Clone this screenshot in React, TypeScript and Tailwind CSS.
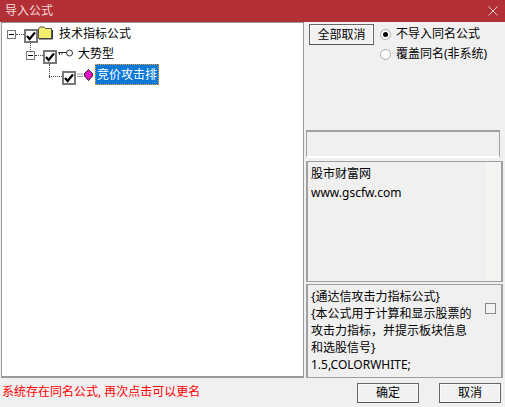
import React from "react";

const font = { fontFamily: '"Noto Sans","Noto Sans CJK SC",sans-serif' };

function Check({ drop }: { drop?: string }) {
  return (
    <span className="relative mt-[3px] w-[14px] h-[14px] border-2 border-[#777] bg-white flex items-center justify-center shrink-0">
      <svg width="10" height="10" viewBox="0 0 10 10"><path d="M1 5 L3.6 8 L9 1.5" fill="none" stroke="#000" strokeWidth="2.2" /></svg>
      {drop && <span className={"absolute left-[4px] top-[12px] border-l border-dotted border-[#444] " + drop} />}
    </span>
  );
}

function Minus() {
  return (
    <span className="w-[9px] h-[9px] border border-[#777] bg-white flex items-center justify-center shrink-0">
      <span className="w-[5px] h-px bg-black" />
    </span>
  );
}

function Btn({ children, className }: { children: React.ReactNode; className: string }) {
  return (
    <button className={"border border-[#666] border-b-[#555] bg-[#f1f1f1] shadow-[inset_0_0_0_1px_#fbfbfb] text-[12px] text-black flex items-center justify-center " + className}>
      {children}
    </button>
  );
}

function Radio({ on, label }: { on?: boolean; label: string }) {
  return (
    <div className="flex items-center h-[20px] gap-[5px]">
      <span className="w-[11px] h-[11px] rounded-full border border-[#a8a8a8] bg-white flex items-center justify-center shrink-0">
        {on && <span className="w-[5px] h-[5px] rounded-full bg-black" />}
      </span>
      <span className="text-[12px] text-black whitespace-nowrap">{label}</span>
    </div>
  );
}

export default function App() {
  return (
    <div className="w-[505px] h-[407px] flex flex-col bg-[#f0f0f0] overflow-hidden" style={font}>
      <div className="h-[22px] shrink-0 bg-[#b23035] flex items-center justify-between pl-[5px] pr-[6px]">
        <span className="text-[12px] leading-none text-[#f3dcdc]">导入公式</span>
        <svg width="10" height="10" viewBox="0 0 10 10" className="mr-[1px]"><path d="M0.5 0.5 L9.5 9.5 M9.5 0.5 L0.5 9.5" stroke="#ecc9ca" strokeWidth="1" /></svg>
      </div>
      <div className="flex-1 flex min-h-0">
        <div className="w-[304px] shrink-0 flex flex-col pl-[1px]">
          <div className="h-[356px] bg-white border border-t-[1px] border-[#999] border-b-2 pt-[1px] pl-[5px] text-[12px] leading-none text-black">
            <div className="flex items-center h-[21px]">
              <Minus />
              <span className="w-[8px] border-t border-dotted border-[#444]" />
              <Check drop="h-[9px]" />
              <svg width="15" height="14" viewBox="0 0 15 14" className="mb-[4px]"><path d="M0.5 3 L2 1 H6 L7.5 2.5 H13.5 V12.5 H0.5 Z" fill="#f5ee6c" stroke="#555" /><path d="M1 13 H14.5 V4" fill="none" stroke="#333" /></svg>
              <span className="ml-[6px] mb-[2px] whitespace-nowrap">技术指标公式</span>
            </div>
            <div className="flex items-center h-[21px] pl-[19px]">
              <Minus />
              <span className="w-[8px] border-t border-dotted border-[#444]" />
              <Check drop="h-[14px]" />
              <svg width="15" height="8" viewBox="0 0 15 8" className="ml-[1px] mb-[5px]"><circle cx="11.5" cy="4" r="3" fill="#fff" stroke="#333" /><path d="M0 3.5 H8 M1.5 3.5 V6 M4 3.5 V5.5" stroke="#333" fill="none" /></svg>
              <span className="ml-[5px] mb-[4px] whitespace-nowrap">大势型</span>
            </div>
            <div className="flex items-center h-[21px] pl-[42px]">
              <span className="w-[13px] border-t border-dotted border-[#444]" />
              <Check />
              <svg width="16" height="12" viewBox="0 0 16 12" className="ml-[1px] mb-[3px]"><path d="M0 5 H6 M0 7.5 H6" stroke="#999" /><path d="M11.5 0.5 L15.5 4.5 V7 L11.5 11.5 L7.5 7 V4.5 Z" fill="#e815c8" stroke="#222" /></svg>
              <span className="ml-[2px] mb-[4px] h-[21px] w-[64px] bg-[#0a78d7] text-white border border-dotted border-[#f0a030] flex items-center justify-center whitespace-nowrap">竞价攻击排</span>
            </div>
          </div>
          <div className="h-[29px] flex items-center text-[12px] text-[#ff0000] whitespace-nowrap pl-[1px] pb-[2px]">系统存在同名公式, 再次点击可以更名</div>
        </div>
        <div className="flex-1 flex flex-col min-w-0 pl-[2px]">
          <div className="h-[108px] shrink-0 flex items-start pt-[2px] pl-[3px]">
            <Btn className="w-[65px] h-[21px]">全部取消</Btn>
            <div className="ml-[6px] flex flex-col">
              <Radio on label="不导入同名公式" />
              <Radio label="覆盖同名(非系统)" />
            </div>
          </div>
          <div className="h-[28px] w-[194px] shrink-0 border-t-2 border-l border-r border-[#a0a0a0] border-b-2 border-b-white" />
          <div className="h-[121px] mt-[3px] w-[197px] shrink-0 border-x-2 border-y border-[#a0a0a0] pl-[3px] pt-[2px] text-[12px] leading-[19px] text-black bg-gradient-to-r from-[#f0f0f0] from-[92%] to-[#f4f4f2] to-[92%]">
            <div>股市财富网</div>
            <div>www.gscfw.com</div>
          </div>
          <div className="h-[94px] mt-[2px] w-[197px] shrink-0 border border-[#a0a0a0] border-x-2 flex pl-[3px] pt-[3px] text-[12px] leading-[17px] text-black">
            <div className="w-[164px] shrink-0">
              <div className="whitespace-nowrap">{"{通达信攻击力指标公式}"}</div>
              <div className="whitespace-nowrap">{"{本公式用于计算和显示股票的"}</div>
              <div className="whitespace-nowrap">攻击力指标，并提示板块信息</div>
              <div className="whitespace-nowrap">{"和选股信号}"}</div>
              <div>1.5,COLORWHITE;</div>
            </div>
            <span className="ml-[10px] mt-[15px] w-[11px] h-[11px] border border-[#888] bg-[#f2f2f2] shrink-0" />
          </div>
          <div className="flex-1 flex items-center pl-[51px] gap-[20px]">
            <Btn className="w-[62px] h-[20px]">确定</Btn>
            <Btn className="w-[62px] h-[20px]">取消</Btn>
          </div>
        </div>
      </div>
    </div>
  );
}
